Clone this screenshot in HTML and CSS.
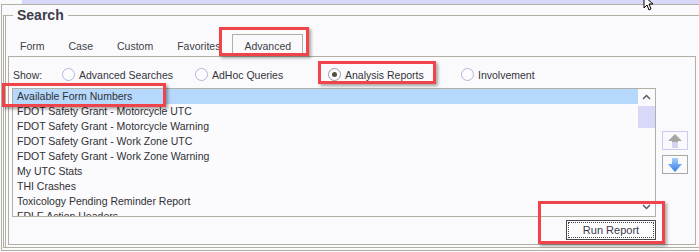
FILE: index.html
```html
<!DOCTYPE html>
<html lang="en">
<head>
    <meta charset="UTF-8">
    <title>Search - Advanced</title>
    <link rel="stylesheet" href="styles.css">
</head>
<body>
    <div class="topbar"></div>
    <div class="frame">
        <fieldset class="search">
            <legend>Search</legend>

            <!-- tabs -->
            <div class="tabs">
                <span class="tab">Form</span>
                <span class="tab">Case</span>
                <span class="tab">Custom</span>
                <span class="tab">Favorites</span>
                <span class="tab active">Advanced</span>
            </div>

            <div class="panel">
                <div class="show-row">
                    <span class="show-label">Show:</span>
                    <label class="opt"><span class="radio"></span>Advanced Searches</label>
                    <label class="opt"><span class="radio"></span>AdHoc Queries</label>
                    <label class="opt"><span class="radio checked"></span>Analysis Reports</label>
                    <label class="opt"><span class="radio"></span>Involvement</label>
                </div>

                <div class="list-row">
                    <div class="listbox">
                        <ul class="items" id="items"></ul>
                        <div class="scrollbar">
                            <svg class="caret" width="9" height="6" viewBox="0 0 9 6"><polyline points="1,5 4.5,1.5 8,5" fill="none" stroke="#5a5a68" stroke-width="1.5"/></svg>
                            <div class="thumb"></div>
                            <div class="track"></div>
                            <svg class="caret" width="9" height="6" viewBox="0 0 9 6"><polyline points="1,1 4.5,4.5 8,1" fill="none" stroke="#5a5a68" stroke-width="1.5"/></svg>
                        </div>
                    </div>
                    <div class="movers">
                        <button class="move up">
                            <svg width="16" height="16" viewBox="0 0 16 16"><path d="M8 1 L15 8 L11 8 L11 14 Q8 16 5 14 L5 8 L1 8 Z" fill="#a6a6a6"/><path d="M5 9 L11 9 L11 14 Q8 16 5 14 Z" fill="#d4d4f0"/></svg>
                        </button>
                        <button class="move down">
                            <svg width="16" height="16" viewBox="0 0 16 16"><defs><linearGradient id="blu" x1="0" y1="0" x2="0" y2="1"><stop offset="0" stop-color="#a8d0fa"/><stop offset="1" stop-color="#2f7be6"/></linearGradient></defs><path d="M5 1 L11 1 L11 7 L15 7 L8 15 L1 7 L5 7 Z" fill="url(#blu)"/></svg>
                        </button>
                    </div>
                </div>

                <div class="actions">
                    <button class="run"><span>Run Report</span></button>
                </div>
            </div>
        </fieldset>
    </div>

    <!-- annotation boxes -->
    <div class="mark mark-tab"></div>
    <div class="mark mark-radio"></div>
    <div class="mark mark-item"></div>
    <div class="mark mark-run"></div>

    <svg class="cursor" width="14" height="11" viewBox="0 0 14 11"><path d="M1 -4 L1 8 L4 5 L6 10 L8 9 L6 4 L10 4 Z" fill="#fff" stroke="#000" stroke-width="1"/></svg>

    <script>
        // report names in the list
        const reports = [
            "Available Form Numbers",
            "FDOT Safety Grant - Motorcycle UTC",
            "FDOT Safety Grant - Motorcycle Warning",
            "FDOT Safety Grant - Work Zone UTC",
            "FDOT Safety Grant - Work Zone Warning",
            "My UTC Stats",
            "THI Crashes",
            "Toxicology Pending Reminder Report",
            "FDLE Action Headers"
        ];

        const items = document.getElementById('items');
        reports.forEach((name, i) => {
            const li = document.createElement('li');
            li.textContent = name;
            if (i === 0) li.className = 'selected';
            items.appendChild(li);
        });
    </script>
</body>
</html>
```

FILE: styles.css
```css
* {
    margin: 0;
    padding: 0;
    box-sizing: border-box;
}
body {
    background: #fafafc;
    font-family: 'Liberation Sans', Arial, sans-serif;
    font-size: 10.5px;
    color: #34343c;
    width: 699px;
    height: 252px;
    overflow: hidden;
    position: relative;
}
.topbar {
    height: 4px;
    margin-left: 22px;
    background: #d8d8f8;
}
.frame {
    margin-left: 1px;
    height: 247px;
    border-top: 1px solid #b2b0a4;
    border-left: 1px solid #b2b0a4;
    border-bottom: 1px solid #b2b0a4;
    padding-left: 1px;
}
.search {
    margin-top: 1px;
    border: 1px solid #b2b0a4;
    border-right: none;
    border-left: 3px double #b2b0a4;
    padding: 0;
    min-width: 0;
}
.search legend {
    margin-left: 7px;
    padding: 0 4px;
    font-size: 14px;
    font-weight: bold;
    line-height: 18px;
    color: #3c3c4c;
}
.tabs {
    display: flex;
    margin: 10px 0 0 2px;
    height: 22px;
    align-items: flex-start;
}
.tab {
    padding: 3px 11px 0;
    height: 20px;
    line-height: 16px;
    border: 1px solid transparent;
    color: #404048;
}
.tab.active {
    border-color: #b2b0a4;
}
.panel {
    margin: 0 0 2px 2px;
    width: 688px;
    border: 1px solid #b2b0a4;
    padding: 0 0 4px 3px;
}
.show-row {
    display: grid;
    grid-template-columns: 49px repeat(4, 133px);
    align-items: center;
    height: 13px;
    margin: 11px 0 7px;
    padding-left: 1px;
}
.opt {
    display: flex;
    align-items: center;
    gap: 4px;
}
.radio {
    width: 13px;
    height: 13px;
    border-radius: 50%;
    border: 1px solid #b4b4dc;
    background: #fcfcff;
    display: flex;
    align-items: center;
    justify-content: center;
}
.radio.checked {
    border-color: #9a9aa8;
}
.radio.checked::after {
    content: "";
    width: 5px;
    height: 5px;
    border-radius: 50%;
    background: #50503c;
}
.list-row {
    display: flex;
    align-items: center;
    gap: 6px;
}
.listbox {
    width: 644px;
    height: 129px;
    border: 1px solid #b2b0a4;
    display: flex;
    background: #fbfbfd;
}
.items {
    list-style: none;
    flex: 1;
    overflow: hidden;
}
.items li {
    height: 15px;
    line-height: 15px;
    padding-left: 4px;
    white-space: nowrap;
    color: #303034;
}
.items li.selected {
    background: #b6d8fc;
}
.scrollbar {
    width: 17px;
    display: flex;
    flex-direction: column;
    align-items: center;
}
.caret {
    margin: 5px 0 6px;
}
.thumb {
    width: 17px;
    height: 22px;
    background: #d8d8f8;
}
.track {
    flex: 1;
}
.movers {
    display: flex;
    flex-direction: column;
    gap: 5px;
}
.move {
    width: 26px;
    height: 19px;
    background: #fafafc;
    border: 1px solid #a8a8a4;
    display: flex;
    align-items: center;
    justify-content: center;
}
.move.up {
    border-color: #cacaf2;
}
.actions {
    display: flex;
    justify-content: flex-end;
    width: 644px;
    margin-top: 3px;
}
.run {
    width: 90px;
    height: 20px;
    background: #fff;
    border: 1px solid #48484c;
    padding: 1px;
    font: inherit;
    font-size: 11px;
    color: #38384a;
}
.run span {
    display: block;
    height: 100%;
    border: 1px dotted #48484c;
    line-height: 14px;
}
.mark {
    position: absolute;
    border: 3px solid #f0444a;
    box-shadow: 2px 2px 3px rgba(0, 0, 0, 0.35);
}
.mark-tab {
    left: 219px;
    top: 27px;
    width: 90px;
    height: 29px;
}
.mark-radio {
    left: 318px;
    top: 61px;
    width: 118px;
    height: 23px;
}
.mark-item {
    left: 2px;
    top: 83px;
    width: 164px;
    height: 24px;
}
.mark-run {
    left: 538px;
    top: 201px;
    width: 127px;
    height: 43px;
}
.cursor {
    position: absolute;
    left: 643px;
    top: 0;
}
```
